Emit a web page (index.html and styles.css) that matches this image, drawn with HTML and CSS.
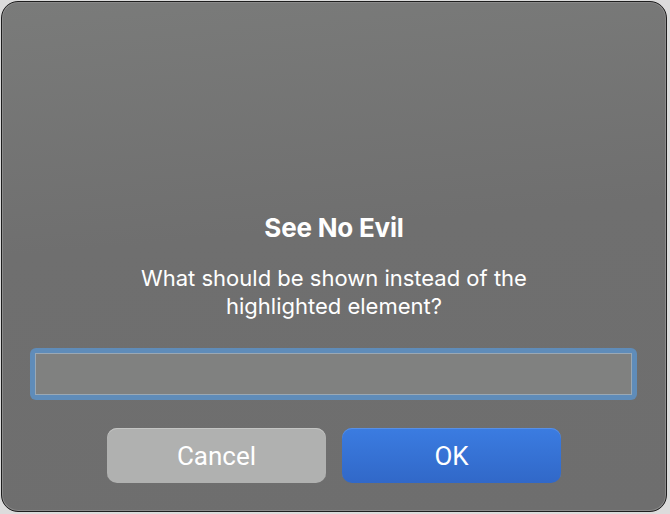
FILE: index.html
```html
<!DOCTYPE html>
<html>
<head>
<meta charset="utf-8">
<link rel="stylesheet" href="styles.css">
</head>
<body>
<div class="dialog">
  <h1 class="title">See No Evil</h1>
  <p class="message">What should be shown instead of the<br>highlighted element?</p>
  <div class="field-ring"><div class="field"></div></div>
  <div class="buttons">
    <div class="btn btn-cancel">Cancel</div>
    <div class="btn btn-ok">OK</div>
  </div>
</div>
</body>
</html>
```
FILE: styles.css
```css
html, body {
  margin: 0;
  padding: 0;
}
body {
  background: #dcdcdc;
  width: 670px;
  height: 514px;
  overflow: hidden;
  font-family: Inter, "Noto Sans", "Liberation Sans", sans-serif;
}
.dialog {
  box-sizing: border-box;
  margin: 1px 0 0 1px;
  width: 666px;
  height: 511px;
  border: 1px solid #1e1e1e;
  border-radius: 17px;
  background: linear-gradient(175deg, #7a7b7a 0%, #6f6f6f 45%, #6e6e6e 100%);
  box-shadow: inset 0 0 0 1px #8a8a8a;
  display: flex;
  flex-direction: column;
  align-items: center;
  padding-top: 212px;
  color: #fff;
}
.title {
  margin: 0;
  font-size: 26px;
  font-weight: 700;
  line-height: 28px;
  letter-spacing: -0.2px;
}
.message {
  margin: 22px 0 0;
  font-size: 22px;
  line-height: 28px;
  text-align: center;
}
.field-ring {
  box-sizing: border-box;
  margin-top: 28px;
  align-self: flex-start;
  margin-left: 28px;
  width: 607px;
  height: 52px;
  border-radius: 6px;
  background: #5f8cb9;
  padding: 5px;
}
.field {
  box-sizing: border-box;
  height: 100%;
  background: #808180;
  border: 1px solid #9aa8b4;
}
.buttons {
  display: flex;
  gap: 16px;
  margin-top: 28px;
}
.btn {
  box-sizing: border-box;
  width: 219px;
  height: 55px;
  border-radius: 10px;
  display: flex;
  align-items: center;
  justify-content: center;
  font-family: Roboto, "Liberation Sans", sans-serif;
  font-size: 26px;
  font-weight: 400;
  color: #fff;
}
.btn-cancel {
  background: #b0b1b0;
  box-shadow: inset 0 1px 0 #c4c5c4;
}
.btn-ok {
  background: linear-gradient(180deg, #3b7ce1 0%, #3168c8 100%);
  box-shadow: inset 0 1px 0 #5890e6;
}
```
